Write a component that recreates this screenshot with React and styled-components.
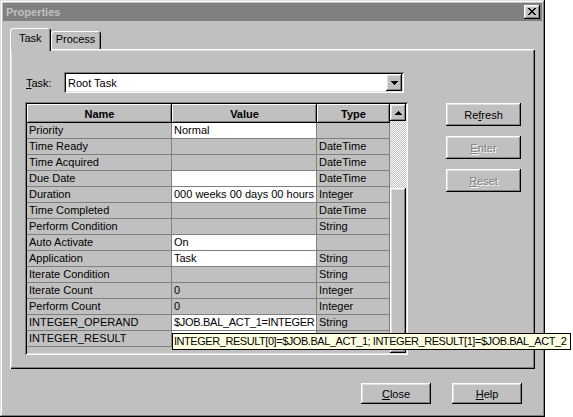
import React from 'react';
import styled, { createGlobalStyle, css } from 'styled-components';

const GlobalStyle = createGlobalStyle`
  html, body { margin: 0; padding: 0; background: #fff; }
  body { font-family: "Liberation Sans", Arial, sans-serif; font-size: 11px; color: #000; }
  * { box-sizing: border-box; }
`;

const raised = css`
  box-shadow: inset -1px -1px #000, inset 1px 1px #fff, inset -2px -2px #808080, inset 2px 2px #dfdfdf;
`;

const sunken = css`
  box-shadow: inset 1px 1px #808080, inset -1px -1px #fff, inset 2px 2px #000, inset -2px -2px #dfdfdf;
`;

const Window = styled.div`
  position: relative;
  width: 545px;
  height: 417px;
  padding: 3px;
  background: #c0c0c0;
  display: flex;
  flex-direction: column;
  box-shadow: inset -1px -1px #000, inset 1px 1px #dfdfdf, inset -2px -2px #808080, inset 2px 2px #fff;
`;

const TitleBar = styled.div`
  height: 18px;
  background: #808080;
  display: flex;
  align-items: center;
  justify-content: space-between;
  padding: 0 2px 0 3px;
`;

const Title = styled.span`
  color: #c0c0c0;
  font-weight: bold;
  font-size: 11px;
`;

const CloseBox = styled.div`
  width: 16px;
  height: 14px;
  background: #c0c0c0;
  ${raised}
  display: flex;
  align-items: center;
  justify-content: center;
  padding-bottom: 1px;
`;

const TabRow = styled.div`
  margin-top: 7px;
  height: 21px;
  padding-left: 7px;
  display: flex;
  align-items: flex-end;
`;

const Tab = styled.div`
  position: relative;
  height: ${p => (p.$active ? '23px' : '18px')};
  margin-bottom: ${p => (p.$active ? '-2px' : '0')};
  z-index: ${p => (p.$active ? 1 : 0)};
  padding: ${p => (p.$active ? '4px 9px 0 9px' : '2px 6px 0 5px')};
  background: #c0c0c0;
  border-radius: 3px 3px 0 0;
  box-shadow: inset 1px 1px #fff, inset -1px 0 #000, inset -2px 0 #808080;
  font-size: 11px;
`;

const Panel = styled.div`
  margin: 0 7px;
  height: 320px;
  padding: 23px 0 0 15px;
  box-shadow: inset 1px 1px #fff, inset -1px -1px #000, inset -2px -2px #808080, inset 2px 2px #dfdfdf;
`;

const TaskRow = styled.div`
  display: flex;
  align-items: center;
  height: 21px;
`;

const Label = styled.label`
  width: 38px;
  margin-left: 1px;
`;

const Combo = styled.div`
  width: 340px;
  height: 21px;
  background: #fff;
  ${sunken}
  display: flex;
  align-items: center;
  justify-content: space-between;
  padding: 2px 2px 2px 4px;
`;

const ArrowBox = styled.div`
  width: 16px;
  height: 17px;
  background: #c0c0c0;
  ${raised}
  display: flex;
  align-items: center;
  justify-content: center;
`;

const Body = styled.div`
  margin-top: 9px;
  display: flex;
  align-items: flex-start;
`;

const Grid = styled.div`
  width: 383px;
  height: 253px;
  padding: 2px;
  background: #c0c0c0;
  display: flex;
  ${sunken}
`;

const Table = styled.div`
  width: 363px;
  display: grid;
  grid-template-columns: 145px 145px 73px;
  grid-auto-rows: 16px;
  grid-template-rows: 19px;
  align-content: start;
`;

const HeadCell = styled.div`
  background: #c0c0c0;
  font-weight: bold;
  display: flex;
  align-items: center;
  justify-content: center;
  box-shadow: inset -1px -1px #000, inset 1px 1px #fff, inset -2px -2px #808080;
`;

const Cell = styled.div`
  background: ${p => (p.$edit ? '#fff' : '#c0c0c0')};
  border-right: 1px solid #808080;
  border-bottom: 1px solid #808080;
  padding-left: 2px;
  line-height: 15px;
  white-space: nowrap;
  overflow: hidden;
  letter-spacing: ${p => (p.$tight ? '-0.3px' : 'normal')};
`;

const ScrollBar = styled.div`
  width: 16px;
  display: flex;
  flex-direction: column;
`;

const ScrollButton = styled.div`
  height: 17px;
  background: #c0c0c0;
  ${raised}
  display: flex;
  align-items: center;
  justify-content: center;
`;

const Track = styled.div`
  height: 67px;
  background-color: #c0c0c0;
  background-image: conic-gradient(#fff 25%, #c0c0c0 0 50%, #fff 0 75%, #c0c0c0 0);
  background-size: 2px 2px;
`;

const Thumb = styled.div`
  flex: 1;
  background: #c0c0c0;
  ${raised}
`;

const ButtonColumn = styled.div`
  margin-left: 38px;
  padding-top: 1px;
  display: flex;
  flex-direction: column;
  gap: 10px;
`;

const Button = styled.div`
  width: ${p => p.$w || 75}px;
  height: ${p => p.$h || 23}px;
  background: #c0c0c0;
  ${raised}
  display: flex;
  align-items: center;
  justify-content: center;
  font-size: 11px;
  color: ${p => (p.$disabled ? '#808080' : '#000')};
  text-shadow: ${p => (p.$disabled ? '1px 1px #fff' : 'none')};
`;

const Footer = styled.div`
  display: flex;
  justify-content: flex-end;
  gap: 21px;
  padding: 14px 20px 0 0;
`;

const Tooltip = styled.div`
  position: absolute;
  left: 172px;
  top: 333px;
  width: 399px;
  height: 17px;
  padding: 0 1px;
  background: #ffffe1;
  border: 1px solid #000;
  line-height: 15px;
  white-space: nowrap;
  letter-spacing: -0.45px;
  z-index: 5;
`;

const rows = [
  ['Priority', 'Normal', '', true],
  ['Time Ready', '', 'DateTime'],
  ['Time Acquired', '', 'DateTime'],
  ['Due Date', '', 'DateTime', true],
  ['Duration', '000 weeks 00 days 00 hours', 'Integer', true],
  ['Time Completed', '', 'DateTime'],
  ['Perform Condition', '', 'String'],
  ['Auto Activate', 'On', '', true],
  ['Application', 'Task', 'String', true],
  ['Iterate Condition', '', 'String'],
  ['Iterate Count', '0', 'Integer'],
  ['Perform Count', '0', 'Integer'],
  ['INTEGER_OPERAND', '$JOB.BAL_ACT_1=INTEGER', 'String', true, true],
  ['INTEGER_RESULT', '', '', true],
];

const Arrow = ({ up }) => (
  <svg width="7" height="4" viewBox="0 0 7 4">
    <path d={up ? 'M3 0h1v1h1v1h1v1h1v1H0V3h1V2h1V1h1z' : 'M0 0h7v1H6v1H5v1H4v1H3V3H2V2H1V1H0z'} fill="#000" />
  </svg>
);

export default function App() {
  return (
    <>
      <GlobalStyle />
      <Window>
        <TitleBar>
          <Title>Properties</Title>
          <CloseBox>
            <svg width="8" height="7" viewBox="0 0 8 7">
              <path d="M0 0h2v1h1v1h2V1h1V0h2v1H7v1H6v1H5v1h1v1h1v1h1v1H6V6H5V5H3v1H2v1H0V6h1V5h1V4h1V3H2V2H1V1H0z" fill="#000" />
            </svg>
          </CloseBox>
        </TitleBar>
        <TabRow>
          <Tab $active>Task</Tab>
          <Tab>Process</Tab>
        </TabRow>
        <Panel>
          <TaskRow>
            <Label><u>T</u>ask:</Label>
            <Combo>
              <span>Root Task</span>
              <ArrowBox><Arrow /></ArrowBox>
            </Combo>
          </TaskRow>
          <Body>
            <Grid>
              <Table>
                <HeadCell>Name</HeadCell>
                <HeadCell>Value</HeadCell>
                <HeadCell>Type</HeadCell>
                {rows.map(([name, value, type, edit, tight]) => (
                  <React.Fragment key={name}>
                    <Cell>{name}</Cell>
                    <Cell $edit={edit} $tight={tight}>{value}</Cell>
                    <Cell>{type}</Cell>
                  </React.Fragment>
                ))}
              </Table>
              <ScrollBar>
                <ScrollButton><Arrow up /></ScrollButton>
                <Track />
                <Thumb />
              </ScrollBar>
            </Grid>
            <ButtonColumn>
              <Button>Re<u>f</u>resh</Button>
              <Button $disabled><u>E</u>nter</Button>
              <Button $disabled><u>R</u>eset</Button>
            </ButtonColumn>
          </Body>
        </Panel>
        <Footer>
          <Button $w={70} $h={21}><u>C</u>lose</Button>
          <Button $w={70} $h={21}><u>H</u>elp</Button>
        </Footer>
        <Tooltip>INTEGER_RESULT[0]=$JOB.BAL_ACT_1; INTEGER_RESULT[1]=$JOB.BAL_ACT_2</Tooltip>
      </Window>
    </>
  );
}
